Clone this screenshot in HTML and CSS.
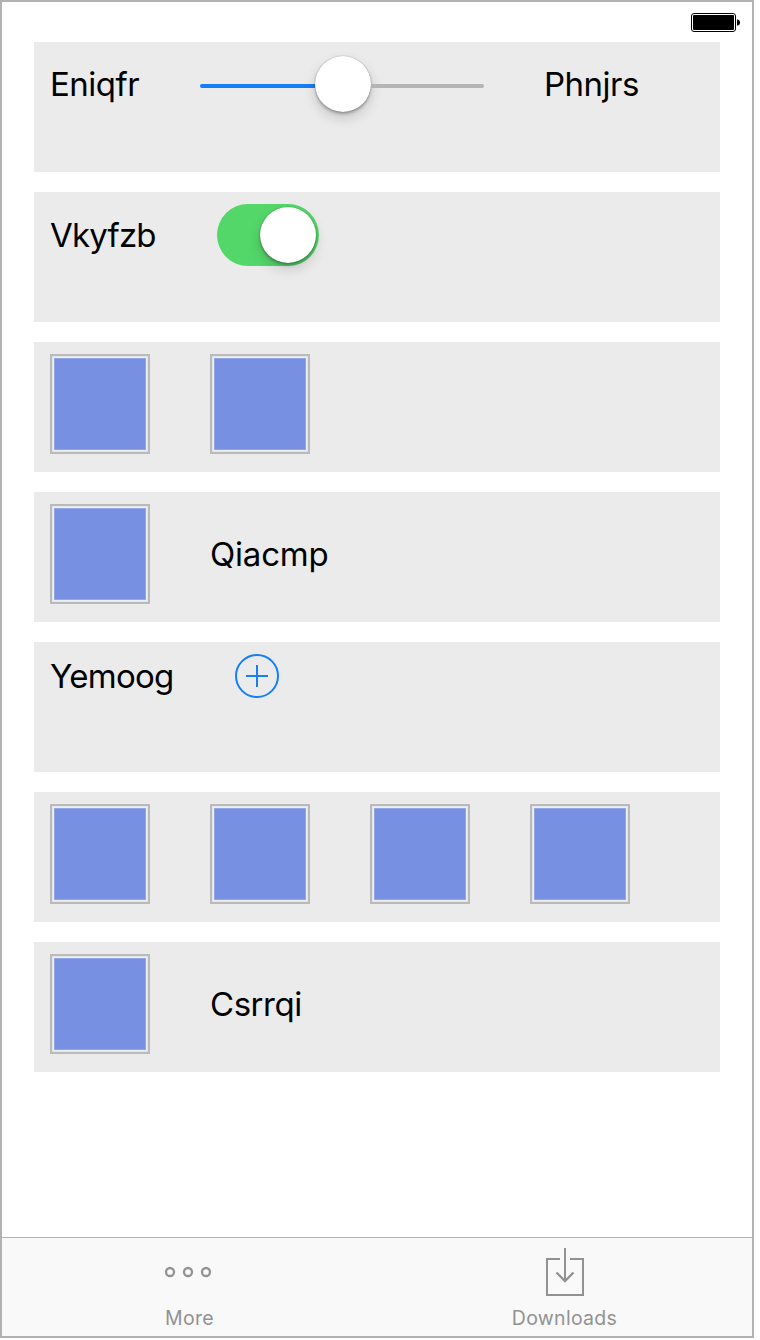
FILE: index.html
```html
<!DOCTYPE html>
<html lang="en">
<head>
<meta charset="utf-8">
<title>Controls</title>
<link rel="stylesheet" href="styles.css">
</head>
<body>
<div class="screen">
  <header class="status">
    <svg class="battery" width="50" height="20" viewBox="0 0 50 20">
      <rect x=".5" y=".5" width="44" height="18" rx="2.5" fill="#fff" stroke="#000"/>
      <rect x="2" y="2" width="41" height="15" rx="1" fill="#000"/>
      <path d="M46 6.200q3 .6 3 3.300t-3 3.300z" fill="#000"/>
    </svg>
  </header>
  <main class="list">
    <section class="row">
      <div class="line line-slider">
        <span class="label eniqfr">Eniqfr</span>
        <div class="slider"><div class="fill"></div><div class="knob"></div><div class="rest"></div></div>
        <span class="label phnjrs">Phnjrs</span>
      </div>
    </section>
    <section class="row">
      <div class="line">
        <span class="label vkyfzb">Vkyfzb</span>
        <div class="switch"><div class="knob"></div></div>
      </div>
    </section>
    <section class="row">
      <div class="line"><div class="tile"></div><div class="tile"></div></div>
    </section>
    <section class="row">
      <div class="line"><div class="tile"></div><span class="label qiacmp">Qiacmp</span></div>
    </section>
    <section class="row">
      <div class="line">
        <span class="label yemoog">Yemoog</span>
        <svg width="44" height="44" viewBox="0 0 44 44" fill="none" stroke="#147efb" stroke-width="2">
          <circle cx="22" cy="22" r="21"/><path d="M11 22h22M22 11v22"/>
        </svg>
      </div>
    </section>
    <section class="row">
      <div class="line"><div class="tile"></div><div class="tile"></div><div class="tile"></div><div class="tile"></div></div>
    </section>
    <section class="row">
      <div class="line"><div class="tile"></div><span class="label csrrqi">Csrrqi</span></div>
    </section>
  </main>
  <nav class="tabs">
    <div class="tab">
      <svg class="icon" width="48" height="50" viewBox="0 0 48 50" fill="none" stroke="#929292" stroke-width="2.3">
        <circle cx="4" cy="25" r="4"/><circle cx="22" cy="25" r="4"/><circle cx="40" cy="25" r="4"/>
      </svg>
      <span class="caption more">More</span>
    </div>
    <div class="tab">
      <svg class="icon" width="38" height="50" viewBox="0 0 38 50" fill="none" stroke="#929292" stroke-width="2">
        <path d="M14 12H1v36h36V12H24M19 1v33"/><path d="M10.500 25.500L19 34l8.500-8.500" stroke-width="2.300"/>
      </svg>
      <span class="caption downloads">Downloads</span>
    </div>
  </nav>
</div>
</body>
</html>
```
FILE: styles.css
```css
body { margin: 0; background: #fff; font-family: Inter, "Liberation Sans", sans-serif; }
.screen {
  box-sizing: border-box; width: 754px; height: 1338px;
  border: 2px solid #b2b2b2; display: flex; flex-direction: column;
}
.status { height: 40px; display: flex; justify-content: flex-end; padding: 11px 11px 0 0; box-sizing: border-box; }
.list { flex: 1; padding: 0 32px; display: flex; flex-direction: column; gap: 20px; }
.row { height: 130px; background: #ebebeb; box-sizing: border-box; padding: 12px 16px; }
.line { display: flex; align-items: center; gap: 60px; }
.line-slider { height: 60px; }
.label { font-size: 33px; line-height: 42px; white-space: nowrap; color: #000; }
.eniqfr { width: 90px; letter-spacing: -.5px; }
.phnjrs { letter-spacing: -.5px; }
.vkyfzb { width: 107px; letter-spacing: -.8px; }
.qiacmp { letter-spacing: -.2px; }
.yemoog { width: 125px; letter-spacing: -.7px; }
.csrrqi { letter-spacing: -.45px; }
.slider { width: 284px; height: 60px; display: flex; align-items: center; }
.fill, .rest { height: 4px; margin-top: 4px; }
.fill { width: 115px; background: #147efb; border-radius: 2px 0 0 2px; }
.rest { flex: 1; background: #b5b5b5; border-radius: 0 2px 2px 0; }
.knob {
  width: 56px; height: 56px; border-radius: 50%; background: #fff;
  box-shadow: 0 0 1px rgba(0,0,0,.4), 0 2px 3px rgba(0,0,0,.28), 0 6px 13px rgba(0,0,0,.16);
}
.switch {
  box-sizing: border-box; width: 102px; height: 62px; padding: 3px; border-radius: 31px;
  background: #53d769; display: flex; justify-content: flex-end;
}
.tile {
  box-sizing: border-box; width: 100px; height: 100px; border: 2px solid #bababa;
  background: #7790e2;
  box-shadow: inset 0 0 0 1px #e4e6ec, inset 0 0 0 2px #edf0fb, inset 0 0 0 3px #92a6e8;
}
.tabs { height: 99px; box-sizing: border-box; border-top: 1px solid #b2b2b2; background: #f9f9f9; display: flex; }
.tab { flex: 1; display: flex; flex-direction: column; align-items: center; padding-top: 9px; }
.icon { display: block; overflow: visible; }
.caption { font-size: 19.5px; line-height: 24px; margin-top: 9px; color: #929292; }
.more { letter-spacing: .3px; }
.downloads { letter-spacing: .3px; }
```
